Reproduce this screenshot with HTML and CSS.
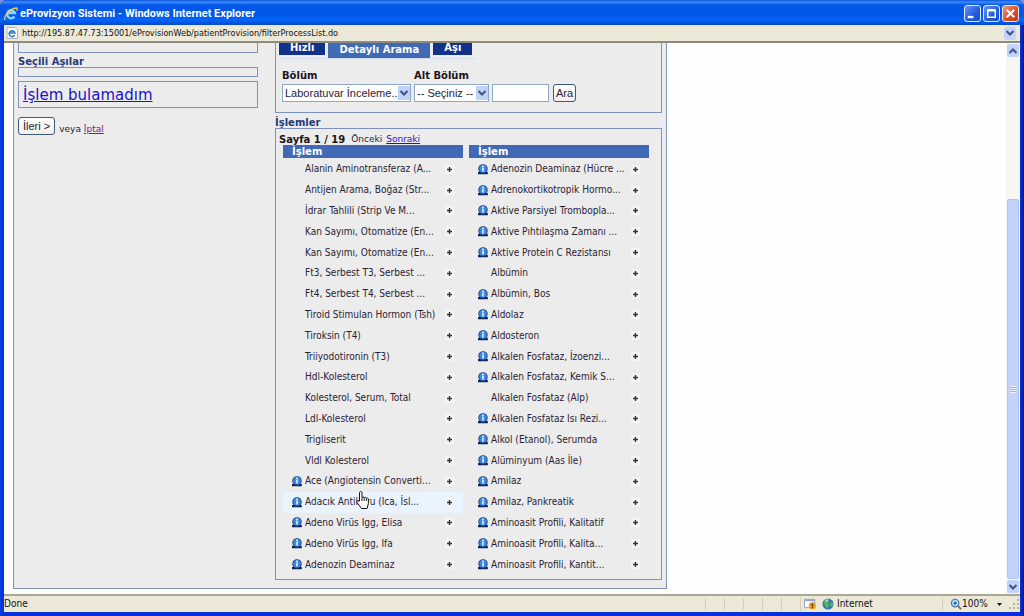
FILE: index.html
```html
<!DOCTYPE html>
<html lang="tr">
<head>
<meta charset="utf-8">
<title>eProvizyon Sistemi</title>
<link rel="stylesheet" href="styles.css">
</head>
<body>
<svg class="defs" aria-hidden="true">
  <symbol id="info" viewBox="0 0 10 11">
    <path d="M0 8h2v1h6V8h1.800v2.300H0z" fill="#0b2050"/>
    <circle cx="5" cy="4.900" r="4.700" fill="#163f86"/>
    <circle cx="5" cy="4.700" r="3.800" fill="#3f88dc"/>
    <path d="M4.200 1.500h1.600v1.400H4.200zM4.200 3.600h1.600v4H4.200z" fill="#e4f3ff"/>
  </symbol>
  <symbol id="plus" viewBox="0 0 9 9">
    <path d="M0 0h9v9H0z" fill="#f4f4f4"/>
    <path d="M3.800 2h1.400v1.800H7v1.400H5.200V7H3.800V5.200H2V3.800h1.800z" fill="#333"/>
  </symbol>
  <symbol id="down" viewBox="0 0 12 12">
    <path d="M2.500 4L6 7.500 9.500 4" fill="none" stroke="#3b5486" stroke-width="2"/>
  </symbol>
  <symbol id="up" viewBox="0 0 12 12">
    <path d="M2.500 8L6 4.500 9.500 8" fill="none" stroke="#3b5486" stroke-width="2"/>
  </symbol>
</svg>
<div class="window">
  <header class="titlebar">
    <svg class="logo" viewBox="0 0 14 14"><path d="M10.500 9.500A4 4 0 1 1 11 6H4" fill="none" stroke="#8fd4ff" stroke-width="2.300"/><path d="M1 13C-1 9 7 1 12.500 1c1.500.3.5 2 0 2.500" fill="none" stroke="#f3cf4c" stroke-width="1.300"/></svg>
    <h1 class="title">eProvizyon Sistemi - Windows Internet Explorer</h1>
    <button class="win-btn" aria-label="Minimize"><svg viewBox="0 0 16 16"><path d="M3 10.500h6v2.500H3z" fill="#fff"/></svg></button>
    <button class="win-btn" aria-label="Maximize"><svg viewBox="0 0 16 16"><path d="M4 5h8v7H4zM3.500 4h9" fill="none" stroke="#fff" stroke-width="1.500"/></svg></button>
    <button class="win-btn close" aria-label="Close"><svg viewBox="0 0 16 16"><path d="M4 4l8 8M12 4l-8 8" stroke="#fff" stroke-width="2.200"/></svg></button>
  </header>
  <div class="address">
    <svg class="page-icon" viewBox="0 0 12 12"><path d="M1 .5h8l2.500 2.500v8.500H1z" fill="#fff" stroke="#a9b0b8"/><path d="M8.600 8.200A2.900 2.900 0 1 1 8.900 6H3.500" fill="none" stroke="#2b7fc4" stroke-width="1.600"/></svg>
    <span class="url">http://195.87.47.73:15001/eProvisionWeb/patientProvision/filterProcessList.do</span>
    <button class="arrow-btn" aria-label="Adresler"><svg><use href="#down"/></svg></button>
  </div>
  <div class="body">
    <main class="view">
      <div class="page">
        <aside class="side">
          <div class="box box-top"></div>
          <h2 class="legend">Seçili Aşılar</h2>
          <div class="box box-empty"></div>
          <div class="box box-link"><a class="big-link" href="#">İşlem bulamadım</a></div>
          <div class="actions"><button class="btn">İleri &gt;</button><span class="or">veya <a class="visited" href="#">İptal</a></span></div>
        </aside>
        <div class="content">
          <section class="search">
            <nav class="tabs">
              <a class="tab" href="#">Hızlı</a><a class="tab active" href="#">Detaylı Arama</a><a class="tab" href="#">Aşı</a>
            </nav>
            <form class="filters">
              <div class="field">
                <label for="bolum">Bölüm</label>
                <span class="select wide"><select id="bolum"><option>Laboratuvar İnceleme...</option></select><svg><use href="#down"/></svg></span>
              </div>
              <div class="field">
                <label for="alt">Alt Bölüm</label>
                <span class="select"><select id="alt"><option>-- Seçiniz --</option></select><svg><use href="#down"/></svg></span>
              </div>
              <input class="text" type="text" aria-label="Arama">
              <button class="btn" type="button">Ara</button>
            </form>
          </section>
          <h2 class="legend spaced">İşlemler</h2>
          <section class="results">
            <p class="pager"><b>Sayfa 1 / 19</b> <span>Önceki</span> <a href="#">Sonraki</a></p>
            <div class="tables">
              <table class="list">
                <thead><tr><th colspan="3">İşlem</th></tr></thead>
                <tbody>
                <tr><td class="ic"></td><td>Alanin Aminotransferaz (A...</td><td class="add"><button aria-label="Ekle"><svg><use href="#plus"/></svg></button></td></tr>
                <tr><td class="ic"></td><td>Antijen Arama, Boğaz (Str...</td><td class="add"><button aria-label="Ekle"><svg><use href="#plus"/></svg></button></td></tr>
                <tr><td class="ic"></td><td>İdrar Tahlili (Strip Ve M...</td><td class="add"><button aria-label="Ekle"><svg><use href="#plus"/></svg></button></td></tr>
                <tr><td class="ic"></td><td>Kan Sayımı, Otomatize (En...</td><td class="add"><button aria-label="Ekle"><svg><use href="#plus"/></svg></button></td></tr>
                <tr><td class="ic"></td><td>Kan Sayımı, Otomatize (En...</td><td class="add"><button aria-label="Ekle"><svg><use href="#plus"/></svg></button></td></tr>
                <tr><td class="ic"></td><td>Ft3, Serbest T3, Serbest ...</td><td class="add"><button aria-label="Ekle"><svg><use href="#plus"/></svg></button></td></tr>
                <tr><td class="ic"></td><td>Ft4, Serbest T4, Serbest ...</td><td class="add"><button aria-label="Ekle"><svg><use href="#plus"/></svg></button></td></tr>
                <tr><td class="ic"></td><td>Tiroid Stimulan Hormon (Tsh)</td><td class="add"><button aria-label="Ekle"><svg><use href="#plus"/></svg></button></td></tr>
                <tr><td class="ic"></td><td>Tiroksin (T4)</td><td class="add"><button aria-label="Ekle"><svg><use href="#plus"/></svg></button></td></tr>
                <tr><td class="ic"></td><td>Triiyodotironin (T3)</td><td class="add"><button aria-label="Ekle"><svg><use href="#plus"/></svg></button></td></tr>
                <tr><td class="ic"></td><td>Hdl-Kolesterol</td><td class="add"><button aria-label="Ekle"><svg><use href="#plus"/></svg></button></td></tr>
                <tr><td class="ic"></td><td>Kolesterol, Serum, Total</td><td class="add"><button aria-label="Ekle"><svg><use href="#plus"/></svg></button></td></tr>
                <tr><td class="ic"></td><td>Ldl-Kolesterol</td><td class="add"><button aria-label="Ekle"><svg><use href="#plus"/></svg></button></td></tr>
                <tr><td class="ic"></td><td>Trigliserit</td><td class="add"><button aria-label="Ekle"><svg><use href="#plus"/></svg></button></td></tr>
                <tr><td class="ic"></td><td>Vldl Kolesterol</td><td class="add"><button aria-label="Ekle"><svg><use href="#plus"/></svg></button></td></tr>
                <tr><td class="ic"><svg><use href="#info"/></svg></td><td>Ace (Angiotensin Converti...</td><td class="add"><button aria-label="Ekle"><svg><use href="#plus"/></svg></button></td></tr>
                <tr class="hover"><td class="ic"><svg><use href="#info"/></svg></td><td>Adacık Antikoru (Ica, İsl...<svg class="cursor" viewBox="0 0 13 18"><path d="M3.500 10V2c0-2 2.500-2 2.500 0v4.500c.8-1 2-.6 2.200.2.800-.7 2-.3 2.200.5 1-.5 2 .1 2 1.200v4.100L11 17.500H5.500L1 11.500c-.8-1.400.7-2.500 1.800-1.300z" fill="#fff" stroke="#111"/><path d="M6 6.500V10M8.200 7v3M10.400 7.500V10" stroke="#222" fill="none"/></svg></td><td class="add"><button aria-label="Ekle"><svg><use href="#plus"/></svg></button></td></tr>
                <tr><td class="ic"><svg><use href="#info"/></svg></td><td>Adeno Virüs Igg, Elisa</td><td class="add"><button aria-label="Ekle"><svg><use href="#plus"/></svg></button></td></tr>
                <tr><td class="ic"><svg><use href="#info"/></svg></td><td>Adeno Virüs Igg, Ifa</td><td class="add"><button aria-label="Ekle"><svg><use href="#plus"/></svg></button></td></tr>
                <tr><td class="ic"><svg><use href="#info"/></svg></td><td>Adenozin Deaminaz</td><td class="add"><button aria-label="Ekle"><svg><use href="#plus"/></svg></button></td></tr>
                </tbody>
              </table>
              <table class="list">
                <thead><tr><th colspan="3">İşlem</th></tr></thead>
                <tbody>
                <tr><td class="ic"><svg><use href="#info"/></svg></td><td>Adenozin Deaminaz (Hücre ...</td><td class="add"><button aria-label="Ekle"><svg><use href="#plus"/></svg></button></td></tr>
                <tr><td class="ic"><svg><use href="#info"/></svg></td><td>Adrenokortikotropik Hormo...</td><td class="add"><button aria-label="Ekle"><svg><use href="#plus"/></svg></button></td></tr>
                <tr><td class="ic"><svg><use href="#info"/></svg></td><td>Aktive Parsiyel Trombopla...</td><td class="add"><button aria-label="Ekle"><svg><use href="#plus"/></svg></button></td></tr>
                <tr><td class="ic"><svg><use href="#info"/></svg></td><td>Aktive Pıhtılaşma Zamanı ...</td><td class="add"><button aria-label="Ekle"><svg><use href="#plus"/></svg></button></td></tr>
                <tr><td class="ic"><svg><use href="#info"/></svg></td><td>Aktive Protein C Rezistansı</td><td class="add"><button aria-label="Ekle"><svg><use href="#plus"/></svg></button></td></tr>
                <tr><td class="ic"></td><td>Albümin</td><td class="add"><button aria-label="Ekle"><svg><use href="#plus"/></svg></button></td></tr>
                <tr><td class="ic"><svg><use href="#info"/></svg></td><td>Albümin, Bos</td><td class="add"><button aria-label="Ekle"><svg><use href="#plus"/></svg></button></td></tr>
                <tr><td class="ic"><svg><use href="#info"/></svg></td><td>Aldolaz</td><td class="add"><button aria-label="Ekle"><svg><use href="#plus"/></svg></button></td></tr>
                <tr><td class="ic"><svg><use href="#info"/></svg></td><td>Aldosteron</td><td class="add"><button aria-label="Ekle"><svg><use href="#plus"/></svg></button></td></tr>
                <tr><td class="ic"><svg><use href="#info"/></svg></td><td>Alkalen Fosfataz, İzoenzi...</td><td class="add"><button aria-label="Ekle"><svg><use href="#plus"/></svg></button></td></tr>
                <tr><td class="ic"><svg><use href="#info"/></svg></td><td>Alkalen Fosfataz, Kemik S...</td><td class="add"><button aria-label="Ekle"><svg><use href="#plus"/></svg></button></td></tr>
                <tr><td class="ic"></td><td>Alkalen Fosfataz (Alp)</td><td class="add"><button aria-label="Ekle"><svg><use href="#plus"/></svg></button></td></tr>
                <tr><td class="ic"><svg><use href="#info"/></svg></td><td>Alkalen Fosfataz Isı Rezi...</td><td class="add"><button aria-label="Ekle"><svg><use href="#plus"/></svg></button></td></tr>
                <tr><td class="ic"><svg><use href="#info"/></svg></td><td>Alkol (Etanol), Serumda</td><td class="add"><button aria-label="Ekle"><svg><use href="#plus"/></svg></button></td></tr>
                <tr><td class="ic"><svg><use href="#info"/></svg></td><td>Alüminyum (Aas İle)</td><td class="add"><button aria-label="Ekle"><svg><use href="#plus"/></svg></button></td></tr>
                <tr><td class="ic"><svg><use href="#info"/></svg></td><td>Amilaz</td><td class="add"><button aria-label="Ekle"><svg><use href="#plus"/></svg></button></td></tr>
                <tr><td class="ic"><svg><use href="#info"/></svg></td><td>Amilaz, Pankreatik</td><td class="add"><button aria-label="Ekle"><svg><use href="#plus"/></svg></button></td></tr>
                <tr><td class="ic"><svg><use href="#info"/></svg></td><td>Aminoasit Profili, Kalitatif</td><td class="add"><button aria-label="Ekle"><svg><use href="#plus"/></svg></button></td></tr>
                <tr><td class="ic"><svg><use href="#info"/></svg></td><td>Aminoasit Profili, Kalita...</td><td class="add"><button aria-label="Ekle"><svg><use href="#plus"/></svg></button></td></tr>
                <tr><td class="ic"><svg><use href="#info"/></svg></td><td>Aminoasit Profili, Kantit...</td><td class="add"><button aria-label="Ekle"><svg><use href="#plus"/></svg></button></td></tr>
                </tbody>
              </table>
            </div>
          </section>
        </div>
      </div>
    </main>
    <div class="scrollbar">
      <button class="arrow-btn" aria-label="Yukarı"><svg><use href="#up"/></svg></button>
      <div class="track"><div class="thumb"><i class="grip"></i></div></div>
      <button class="arrow-btn" aria-label="Aşağı"><svg><use href="#down"/></svg></button>
    </div>
  </div>
  <footer class="status">
    <span class="done">Done</span>
    <i class="sep"></i><i class="sep"></i><i class="sep"></i><i class="sep"></i><i class="sep"></i>
    <span class="cell warn"><svg class="s-icon" viewBox="0 0 13 13"><path d="M.5 1.500h11v9H.5z" fill="#fff" stroke="#8b98b5"/><path d="M1 2h10v1.500H1z" fill="#8ba7d8"/><circle cx="9" cy="8.500" r="3.800" fill="#e59a1c"/><path d="M8.500 6h1.200v3H8.500zM8.500 9.800h1.200v1H8.500z" fill="#4a2800"/></svg></span>
    <span class="cell zone"><svg class="s-icon" viewBox="0 0 13 13"><circle cx="6.500" cy="6.500" r="6" fill="#2f78c0"/><path d="M2 3c2-2 5-2 6-1L6.500 5 8 7.500 6 11C3 10 3 8 2.500 6.500zM9 4l3 2-1 4-2-2z" fill="#5db554"/><path d="M4 2l3-.5-2 3z" fill="#c8eaff"/></svg>Internet</span>
    <span class="cell zoom"><svg class="s-icon" viewBox="0 0 13 13"><path d="M8 8l4 4" stroke="#8a6a3c" stroke-width="2"/><circle cx="5.500" cy="5.500" r="4" fill="#cfe9ff" stroke="#4682c0" stroke-width="1.500"/><path d="M5.500 3.500v4M3.500 5.500h4" stroke="#1c5ba8" stroke-width="1.300"/></svg>100%<svg class="caret" viewBox="0 0 5 3"><path d="M0 0h5L2.500 3z" fill="#111"/></svg></span>
    <svg class="resize" viewBox="0 0 12 12"><path d="M9 1h2v2H9zM9 5h2v2H9zM5 5h2v2H5zM9 9h2v2H9zM5 9h2v2H5zM1 9h2v2H1z" fill="#b8b4a0"/></svg>
  </footer>
</div>
</body>
</html>
```

FILE: styles.css
```css
* { box-sizing: border-box; }
body {
  margin: 0;
  background: #7d8fd8;
  font: 10px/14px "DejaVu Sans", Verdana, sans-serif;
  color: #2a2233;
}
button, input, select { font: 11px/14px "Liberation Sans", Arial, sans-serif; color: #2a2233; }
button { padding: 0; }
svg { display: block; }
a { color: #1a12cc; }
.defs { position: absolute; width: 0; height: 0; }

.window {
  display: flex;
  flex-direction: column;
  height: 100vh;
  padding: 0 4px 4px;
  background: linear-gradient(90deg, #0a3fe0, #0831d9 3px, #0831d9 calc(100% - 4px), #0018a0);
  border-radius: 7px 7px 0 0;
  overflow: hidden;
}
.titlebar {
  display: flex;
  align-items: center;
  gap: 2px;
  height: 25px;
  margin: 0 -4px;
  padding: 2px 5px 0 4px;
  flex: none;
  background: linear-gradient(#0a50d8, #3c8cfb 2px, #0458ea 5px, #0054e6 14px, #0464fb 20px, #0448d0);
}
.logo { width: 14px; height: 14px; }
.title {
  flex: 1;
  margin: 0;
  font: bold 11px/16px Roboto, "Liberation Sans", sans-serif;
  color: #fff;
}
.win-btn {
  width: 17px;
  height: 17px;
  border: 1px solid #dfe9ff;
  border-radius: 3px;
  background: linear-gradient(135deg, #6a96f5, #2359dd 60%, #1c4fd0);
}
.close { background: linear-gradient(135deg, #f09a80, #dd4a20 60%, #c63a14); }
.address {
  display: flex;
  align-items: center;
  gap: 4px;
  height: 18px;
  padding: 0 4px 0 2px;
  flex: none;
  background: #ece9d8;
  border-bottom: 2px solid #8d8b80;
}
.page-icon { width: 12px; height: 12px; }
.url { flex: 1; font: 9px/14px "DejaVu Sans Condensed", "DejaVu Sans", sans-serif; color: #111; }
.arrow-btn {
  display: grid;
  place-items: center;
  width: 12px;
  height: 13px;
  border: 0;
  border-radius: 2px;
  background: #c3d3fb;
  flex: none;
}
.arrow-btn svg { width: 12px; height: 12px; }

.body { display: flex; flex: 1; min-height: 0; background: #fefefe; }
.view { flex: 1; min-width: 0; overflow: hidden; padding-left: 9px; }
.page {
  display: flex;
  gap: 17px;
  width: 654px;
  max-width: 100%;
  padding: 0 4px 8px;
  background: #ececec;
  border: 1px solid #8193bd;
  border-top: 0;
}
.side { width: 240px; flex: none; }
.content { flex: 1; min-width: 0; }
.box { border: 1px solid #7d92bf; }
.box-top { height: 10px; border-top: 0; }
.box-empty { height: 10px; margin-bottom: 4px; }
.box-link { padding: 3px 4px 1px; }
.big-link { font-size: 15px; line-height: 21px; }
.legend { margin: 0; padding-top: 4px; font-size: 10px; line-height: 10px; color: #263a78; }
.legend.spaced { padding-top: 5px; }
.actions { display: flex; gap: 4px; margin-top: 9px; }
.or { font-size: 9px; line-height: 14px; padding-top: 5px; }
.visited { color: #802078; }
.btn {
  height: 18px;
  padding: 0 4px;
  border: 1px solid #3d5878;
  border-radius: 3px;
  background: linear-gradient(#fff, #f1f0ea);
  white-space: nowrap;
}
.search { padding: 0 6px 10px; border: 1px solid #7d92bf; border-top: 0; }
.tabs {
  display: flex;
  align-items: flex-start;
  gap: 3px;
  width: fit-content;
  height: 16px;
  margin-left: -3px;
  padding-right: 3px;
  border-bottom: 1px solid #d3deee;
}
.tab {
  padding: 0 11px 2px;
  background: #123188;
  color: #fff;
  font-weight: bold;
  line-height: 10px;
  text-decoration: none;
}
.tab.active { background: #4169b5; line-height: 13px; }
.filters { display: flex; align-items: flex-end; gap: 3px; margin-top: 10px; }
.field { display: flex; flex-direction: column; gap: 1px; }
.field label { font-weight: bold; line-height: 14px; color: #1c1420; }
.select { position: relative; width: 75px; }
.select.wide { width: 129px; }
.select select {
  display: block;
  width: 100%;
  height: 18px;
  padding: 0 12px 0 2px;
  appearance: none;
  border: 1px solid #8fa9c4;
  border-radius: 0;
  background: #fff;
}
.select svg { position: absolute; top: 2px; right: 1px; width: 12px; height: 14px; background: #c0d2f8; pointer-events: none; }
.text { width: 57px; height: 18px; border: 1px solid #8fa9c4; background: #fff; }
.filters .btn { padding: 0 2px; margin-left: 1px; }

.results { padding: 4px 12px 4px 3px; border: 1px solid #7d92bf; }
.pager { margin: 0; font-size: 10px; line-height: 13px; display: flex; gap: 4px; }
.pager b { margin-right: 2px; color: #1c1420; }
.pager span, .pager a { font-size: 9px; }
.tables { display: grid; grid-template-columns: 1fr 1fr; gap: 6px; padding-left: 4px; margin-top: -1px; }
.list { width: 100%; height: 430px; border-collapse: separate; border-spacing: 0; }
.list th {
  height: 14px;
  padding: 0 9px;
  border-bottom: 1px solid transparent;
  background: #4169b5 padding-box;
  color: #fff;
  text-align: left;
  line-height: 13px;
}
.list td { padding: 0; font: 10px/14px "DejaVu Sans Condensed", "DejaVu Sans", sans-serif; white-space: nowrap; }
.list .ic { width: 22px; padding-left: 9px; }
.ic svg { width: 10px; height: 11px; }
.list .add { width: 18px; }
.add button { display: block; border: 0; background: none; }
.add svg { width: 9px; height: 9px; }
.hover { background: #eaf4fe; }
.hover td { position: relative; }
.cursor { position: absolute; left: 51px; top: -1px; width: 13px; height: 18px; }

.scrollbar { display: flex; flex-direction: column; width: 14px; padding: 1px 1px; background: #f7f6f2; flex: none; }
.track { flex: 1; display: flex; flex-direction: column; padding: 142px 0 1px; }
.thumb { flex: 1; display: grid; place-items: center; background: #c3d2fa; border: 1px solid #b2c4f0; border-radius: 2px; }
.grip { width: 6px; height: 7px; background: repeating-linear-gradient(#eef3ff 0 1px, #9db4e8 1px 2px); }
.status {
  display: flex;
  align-items: center;
  height: 18px;
  flex: none;
  background: #ece9d8;
  border-top: 2px solid #aaa892;
  font: 10px/14px "DejaVu Sans Condensed", "DejaVu Sans", sans-serif;
  color: #111;
}
.done { flex: 1; }
.sep { width: 19px; height: 12px; border-left: 1px solid #d2cfbc; }
.cell { display: flex; align-items: center; gap: 4px; height: 14px; }
.warn { width: 20px; padding-left: 3px; border-left: 1px solid #d2cfbc; }
.zone { width: 122px; padding-left: 2px; gap: 3px; }
.zoom { width: 62px; padding-left: 7px; gap: 0; border-left: 1px solid #d2cfbc; }
.s-icon { width: 12px; height: 12px; flex: none; }
.caret { width: 5px; height: 3px; margin-left: auto; margin-right: 2px; }
.resize { width: 12px; height: 12px; margin-left: 4px; }
```
